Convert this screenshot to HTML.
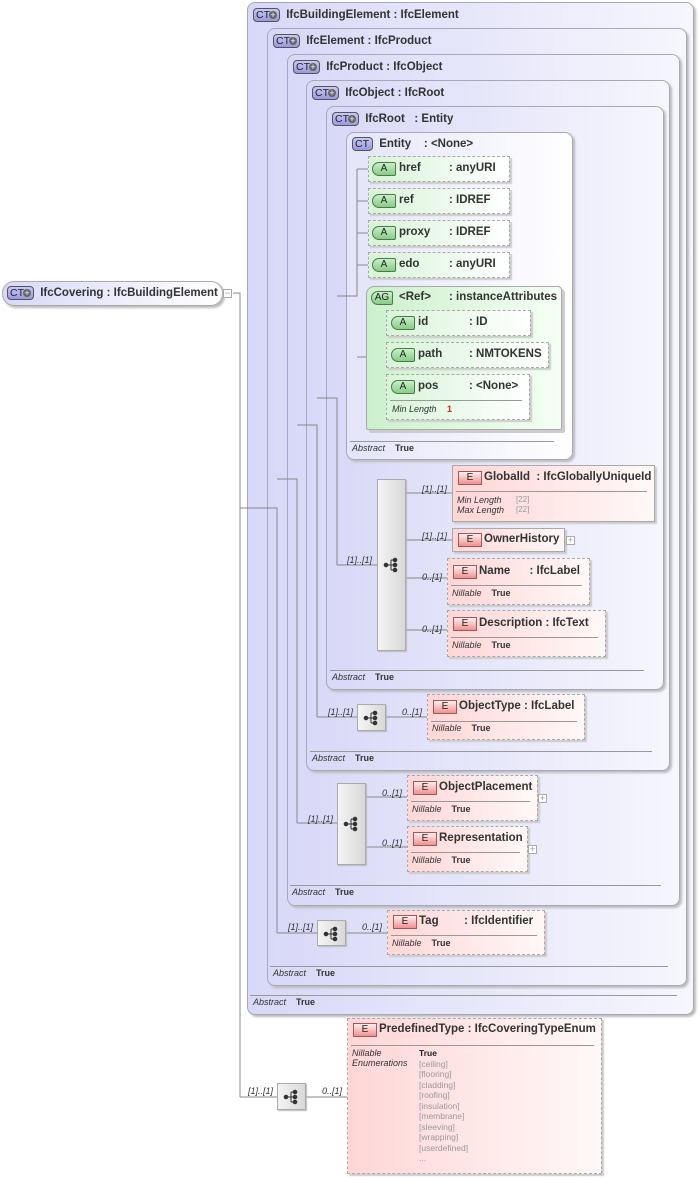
<!DOCTYPE html>
<html><head><meta charset="utf-8"><style>
body{margin:0;width:700px;height:1179px;background:#fff;position:relative;overflow:hidden;font-family:"Liberation Sans",sans-serif;font-size:11px;color:#333}
div,span{position:absolute;box-sizing:border-box}
.ct{border:1px solid #a8a8b8;border-radius:8px;background:linear-gradient(to right,#d8d8f8,#f6f6fd);box-shadow:2px 2px 2px #bbb}
.hd{font-weight:bold;white-space:nowrap;font-size:11.5px}
.ctb{width:27px;height:14px;border:1px solid #555;border-radius:4px;background:linear-gradient(#c8c8f8,#9898e0);font-size:10.5px;font-weight:normal;line-height:12px;padding-left:2px;color:#222;margin-right:3px}
.ctb i{position:absolute;right:2px;top:2px;width:8px;height:8px;border-radius:50%;background:#666;font-style:normal;color:#fff;font-size:9px;line-height:8px;text-align:center}
.ab{font-size:9px;white-space:nowrap}
.ab em{font-style:italic}
.ab b{margin-left:10px}
.hl{height:1px;background:#999}
.at{border:1px dashed #aaa;background:linear-gradient(to right,#d8f4d8,#fff);box-shadow:2px 2px 1px #ccc}
.ab2{width:24px;height:14px;border:1px solid #4a7a4a;border-radius:7px 2px 2px 7px;background:linear-gradient(#c8f0c8,#88cc88);font-size:10px;text-align:center;line-height:12px;color:#222}
.el{background:linear-gradient(to right,#ffd6d6,#fff8f8);box-shadow:2px 2px 1px #ccc}
.sol{border:1px solid #aaa}.dsh{border:1px dashed #aaa}
.eb{width:24px;height:14px;border:1px solid #a05858;background:linear-gradient(#fff0f0,#f09090);font-size:10px;text-align:center;line-height:12px;color:#222}
.sq{border:1px solid #aaa;background:linear-gradient(to right,#f4f4f4,#d8d8d8);box-shadow:1px 1px 1px #bbb}
.ml{font-size:9px;font-style:italic;white-space:nowrap}
.pl{width:9px;height:9px;border:1px solid #aaa;background:#fff;font-size:9px;line-height:7px;text-align:center;color:#999}
.gr{color:#999;font-size:8px}
</style></head><body>

<div class="ct" style="left:247px;top:2px;width:447px;height:1013px"></div>
<div class="hd" style="left:253px;top:8px"><span class="ctb" style="position:relative;display:inline-block;vertical-align:middle">CT<i>+</i></span> IfcBuildingElement : IfcElement</div>
<div class="hl" style="left:250px;top:995px;width:427px"></div>
<div class="ab" style="left:253px;top:997px"><em>Abstract</em><b>True</b></div>

<div class="ct" style="left:267px;top:28px;width:420px;height:958px"></div>
<div class="hd" style="left:273px;top:34px"><span class="ctb" style="position:relative;display:inline-block;vertical-align:middle">CT<i>+</i></span> IfcElement : IfcProduct</div>
<div class="hl" style="left:270px;top:966px;width:398px"></div>
<div class="ab" style="left:273px;top:968px"><em>Abstract</em><b>True</b></div>

<div class="ct" style="left:287px;top:54px;width:393px;height:852px"></div>
<div class="hd" style="left:293px;top:60px"><span class="ctb" style="position:relative;display:inline-block;vertical-align:middle">CT<i>+</i></span> IfcProduct : IfcObject</div>
<div class="hl" style="left:290px;top:885px;width:371px"></div>
<div class="ab" style="left:292px;top:887px"><em>Abstract</em><b>True</b></div>

<div class="ct" style="left:306px;top:80px;width:364px;height:691px"></div>
<div class="hd" style="left:312px;top:86px"><span class="ctb" style="position:relative;display:inline-block;vertical-align:middle">CT<i>+</i></span> IfcObject : IfcRoot</div>
<div class="hl" style="left:310px;top:751px;width:342px"></div>
<div class="ab" style="left:312px;top:753px"><em>Abstract</em><b>True</b></div>

<div class="ct" style="left:326px;top:106px;width:338px;height:584px"></div>
<div class="hd" style="left:332px;top:112px"><span class="ctb" style="position:relative;display:inline-block;vertical-align:middle">CT<i>+</i></span> IfcRoot &nbsp;&nbsp;: Entity</div>
<div class="hl" style="left:330px;top:670px;width:314px"></div>
<div class="ab" style="left:332px;top:672px"><em>Abstract</em><b>True</b></div>

<div class="ct" style="left:346px;top:132px;width:227px;height:328px;background:linear-gradient(to right,#e4e4fa,#fff)"></div>
<div class="hd" style="left:352px;top:137px"><span class="ctb" style="position:relative;display:inline-block;vertical-align:middle;width:21px">CT</span> Entity &nbsp;&nbsp;&nbsp;: &lt;None&gt;</div>
<div class="hl" style="left:350px;top:441px;width:204px"></div>
<div class="ab" style="left:352px;top:443px"><em>Abstract</em><b>True</b></div>

<svg style="position:absolute;left:0;top:0" width="700" height="1179">
<g stroke="#888" stroke-width="1" fill="none" shape-rendering="crispEdges">
<path d="M233 293H240V1097M240 508H277V933M277 479H297V823M297 425H317V717M317 398H337V565M337 296H357V169"/>
<path d="M357 169H370M357 201H370M357 233H370M357 265H370M357 357H386M377 323V387M377 323H388M377 355H388M377 387H388"/>
<path d="M337 565H377M406 493H452M406 540H452M406 578H447M406 630H447"/>
<path d="M317 717H357M386 717H427M297 823H337M366 797H407M366 847H407M277 933H317M346 933H387M240 1097H277M306 1097H347"/>
</g></svg>

<div class="at" style="left:368px;top:156px;width:142px;height:26px"></div>
<div class="ab2" style="left:372px;top:162px">A</div><div class="hd" style="left:399px;top:162px">href</div><div class="hd" style="left:449px;top:162px">: anyURI</div>
<div class="at" style="left:368px;top:188px;width:142px;height:26px"></div>
<div class="ab2" style="left:372px;top:194px">A</div><div class="hd" style="left:399px;top:194px">ref</div><div class="hd" style="left:449px;top:194px">: IDREF</div>
<div class="at" style="left:368px;top:220px;width:142px;height:26px"></div>
<div class="ab2" style="left:372px;top:226px">A</div><div class="hd" style="left:399px;top:226px">proxy</div><div class="hd" style="left:449px;top:226px">: IDREF</div>
<div class="at" style="left:368px;top:252px;width:142px;height:26px"></div>
<div class="ab2" style="left:372px;top:258px">A</div><div class="hd" style="left:399px;top:258px">edo</div><div class="hd" style="left:449px;top:258px">: anyURI</div>

<div style="left:366px;top:286px;width:196px;height:144px;border:1px solid #aaa;border-radius:8px 4px 2px 2px;background:linear-gradient(to right,#ccf0cc,#f4fff4);box-shadow:3px 3px 0 #ccc"></div>
<div class="ab2" style="left:371px;top:291px;width:22px">AG</div><div class="hd" style="left:399px;top:291px">&lt;Ref&gt;</div><div class="hd" style="left:449px;top:291px">: instanceAttributes</div>
<div class="at" style="left:386px;top:310px;width:145px;height:26px"></div>
<div class="ab2" style="left:391px;top:316px">A</div><div class="hd" style="left:418px;top:316px">id</div><div class="hd" style="left:469px;top:316px">: ID</div>
<div class="at" style="left:386px;top:342px;width:163px;height:26px"></div>
<div class="ab2" style="left:391px;top:348px">A</div><div class="hd" style="left:418px;top:348px">path</div><div class="hd" style="left:469px;top:348px">: NMTOKENS</div>
<div class="at" style="left:386px;top:374px;width:144px;height:46px"></div>
<div class="ab2" style="left:391px;top:380px">A</div><div class="hd" style="left:418px;top:380px">pos</div><div class="hd" style="left:469px;top:380px">: &lt;None&gt;</div>
<div class="hl" style="left:390px;top:400px;width:132px"></div>
<div class="ml" style="left:392px;top:404px">Min Length <b style="color:#e02020;font-style:normal;margin-left:8px">1</b></div>

<div class="sq" style="left:377px;top:479px;width:29px;height:172px"></div>
<div class="ml" style="left:347px;top:555px">[1]..[1]</div>
<div class="ml" style="left:422px;top:484px">[1]..[1]</div>
<div class="ml" style="left:422px;top:531px">[1]..[1]</div>
<div class="ml" style="left:422px;top:572px">0..[1]</div>
<div class="ml" style="left:422px;top:624px">0..[1]</div>

<div class="el sol" style="left:452px;top:465px;width:203px;height:57px"></div>
<div class="eb" style="left:458px;top:471px">E</div><div class="hd" style="left:484px;top:471px">GlobalId &nbsp;: IfcGloballyUniqueId</div>
<div class="hl" style="left:456px;top:491px;width:191px"></div>
<div class="ml" style="left:457px;top:495px">Min Length<br>Max Length</div>
<div class="gr" style="left:516px;top:495px;line-height:10px">[22]<br>[22]</div>

<div class="el sol" style="left:452px;top:528px;width:113px;height:24px"></div>
<div class="eb" style="left:458px;top:533px">E</div><div class="hd" style="left:484px;top:533px">OwnerHistory</div>
<div class="pl" style="left:566px;top:536px">+</div>

<div class="el dsh" style="left:447px;top:558px;width:143px;height:47px"></div>
<div class="eb" style="left:453px;top:565px">E</div><div class="hd" style="left:479px;top:565px">Name &nbsp;&nbsp;&nbsp;&nbsp;&nbsp;: IfcLabel</div>
<div class="hl" style="left:451px;top:585px;width:131px"></div>
<div class="ab" style="left:452px;top:588px"><em>Nillable</em><b>True</b></div>

<div class="el dsh" style="left:447px;top:610px;width:159px;height:47px"></div>
<div class="eb" style="left:453px;top:617px">E</div><div class="hd" style="left:479px;top:617px">Description : IfcText</div>
<div class="hl" style="left:451px;top:637px;width:147px"></div>
<div class="ab" style="left:452px;top:640px"><em>Nillable</em><b>True</b></div>

<div class="sq" style="left:357px;top:704px;width:29px;height:27px"></div>
<div class="ml" style="left:328px;top:707px">[1]..[1]</div>
<div class="ml" style="left:402px;top:707px">0..[1]</div>
<div class="el dsh" style="left:427px;top:694px;width:158px;height:46px"></div>
<div class="eb" style="left:433px;top:700px">E</div><div class="hd" style="left:459px;top:700px">ObjectType : IfcLabel</div>
<div class="hl" style="left:431px;top:721px;width:146px"></div>
<div class="ab" style="left:432px;top:723px"><em>Nillable</em><b>True</b></div>

<div class="sq" style="left:337px;top:783px;width:29px;height:82px"></div>
<div class="ml" style="left:308px;top:814px">[1]..[1]</div>
<div class="ml" style="left:382px;top:788px">0..[1]</div>
<div class="ml" style="left:382px;top:838px">0..[1]</div>
<div class="el dsh" style="left:407px;top:775px;width:131px;height:46px"></div>
<div class="eb" style="left:413px;top:781px">E</div><div class="hd" style="left:439px;top:781px">ObjectPlacement</div>
<div class="hl" style="left:411px;top:801px;width:119px"></div>
<div class="ab" style="left:412px;top:804px"><em>Nillable</em><b>True</b></div>
<div class="pl" style="left:538px;top:794px">+</div>
<div class="el dsh" style="left:407px;top:826px;width:121px;height:46px"></div>
<div class="eb" style="left:413px;top:832px">E</div><div class="hd" style="left:439px;top:832px">Representation</div>
<div class="hl" style="left:411px;top:852px;width:109px"></div>
<div class="ab" style="left:412px;top:855px"><em>Nillable</em><b>True</b></div>
<div class="pl" style="left:528px;top:845px">+</div>

<div class="sq" style="left:317px;top:920px;width:29px;height:26px"></div>
<div class="ml" style="left:288px;top:922px">[1]..[1]</div>
<div class="ml" style="left:362px;top:922px">0..[1]</div>
<div class="el dsh" style="left:387px;top:910px;width:158px;height:45px"></div>
<div class="eb" style="left:393px;top:915px">E</div><div class="hd" style="left:419px;top:915px">Tag &nbsp;&nbsp;&nbsp;&nbsp;&nbsp;&nbsp;&nbsp;: IfcIdentifier</div>
<div class="hl" style="left:391px;top:935px;width:146px"></div>
<div class="ab" style="left:392px;top:938px"><em>Nillable</em><b>True</b></div>

<div class="sq" style="left:277px;top:1083px;width:29px;height:27px"></div>
<div class="ml" style="left:248px;top:1086px">[1]..[1]</div>
<div class="ml" style="left:322px;top:1086px">0..[1]</div>
<div class="el dsh" style="left:347px;top:1018px;width:255px;height:156px"></div>
<div class="eb" style="left:353px;top:1023px">E</div><div class="hd" style="left:379px;top:1023px">PredefinedType : IfcCoveringTypeEnum</div>
<div class="hl" style="left:351px;top:1045px;width:243px"></div>
<div class="ml" style="left:352px;top:1048px;line-height:10px">Nillable<br>Enumerations</div>
<div style="left:419px;top:1048px;font-size:8.5px;line-height:10.5px;color:#999;white-space:nowrap"><b style="color:#222">True</b><br>[ceiling]<br>[flooring]<br>[cladding]<br>[roofing]<br>[insulation]<br>[membrane]<br>[sleeving]<br>[wrapping]<br>[userdefined]<br>...</div>

<svg style="position:absolute;left:0;top:0" width="700" height="1179">
<defs><g id="si" fill="#333" stroke="#333" stroke-width="1"><circle cx="0" cy="0" r="1.8"/><circle cx="9" cy="-5" r="1.8"/><circle cx="9" cy="0" r="1.8"/><circle cx="9" cy="5" r="1.8"/><path d="M0 0H9M5 -5V5M5 -5H9M5 5H9" fill="none"/></g></defs>
<use href="#si" x="386" y="565"/><use href="#si" x="366" y="718"/><use href="#si" x="346" y="824"/><use href="#si" x="326" y="934"/><use href="#si" x="286" y="1097"/>
</svg>

<div style="left:2px;top:281px;width:221px;height:25px;border:1px solid #aaa;border-radius:12px;background:linear-gradient(to right,#d8d8f8,#fff);box-shadow:2px 2px 2px #bbb"></div>
<div class="hd" style="left:7px;top:286px"><span class="ctb" style="position:relative;display:inline-block;vertical-align:middle">CT<i>+</i></span> IfcCovering : IfcBuildingElement</div>
<div class="pl" style="left:223px;top:289px">−</div>
</body></html>
